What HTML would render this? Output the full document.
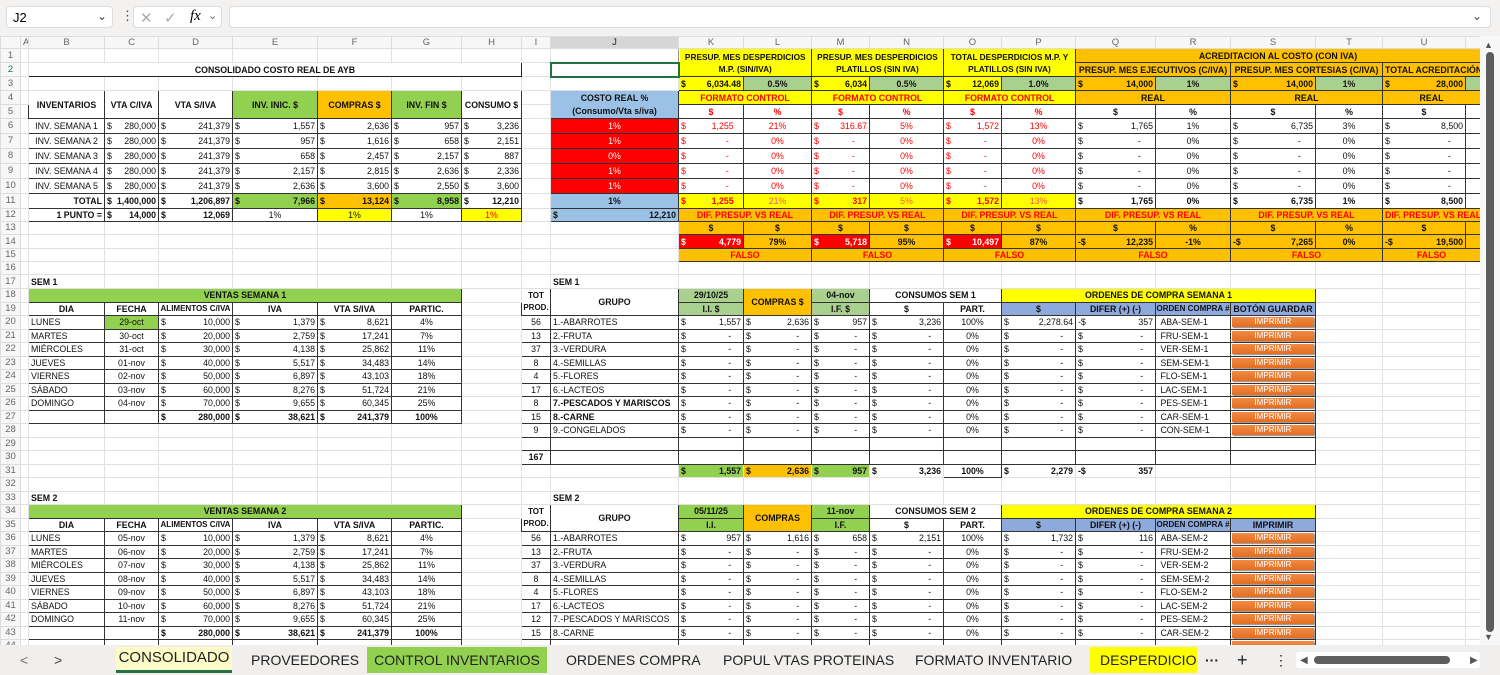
<!DOCTYPE html>
<html><head><meta charset="utf-8">
<style>
*{box-sizing:border-box;margin:0;padding:0}
body{width:1500px;height:675px;overflow:hidden;background:#fff;font-family:"Liberation Sans",sans-serif;position:relative}
#top{position:absolute;left:0;top:0;width:1500px;height:36px;background:#f3f2f0}
.box{position:absolute;background:#fff;border:1px solid #ddd;border-radius:4px}
#grid{position:absolute;left:0;top:36px;width:1480px;height:609px;overflow:hidden}
table{border-collapse:collapse;table-layout:fixed;width:1480px}
td{border:1px solid #e1e1e1;font-size:8.8px;line-height:10px;white-space:nowrap;overflow:hidden;padding:0 2px;color:#111;vertical-align:middle}
tr.ch td{background:#f7f7f7;color:#666;text-align:center;font-size:9.5px;height:12px;border-color:#ddd}
td.rh{background:#f7f7f7;color:#666;text-align:center;font-size:9.5px;padding:0;border-color:#ddd}
.k{border:1px solid #333}
.c{text-align:center}.r{text-align:right}.b{font-weight:bold}
.y{background:#ffff00}.o{background:#ffc000}.g{background:#92d050}.lg{background:#a9d08e}
.bl{background:#9bc2e6}.bb{background:#8ea9db}.rd{background:#ff0000;color:#fff}.rt{color:#f00}
.m{text-align:right}.m i{float:left;font-style:normal}
.d{border-bottom:1px dashed #000}
.w{white-space:normal;text-align:center;font-weight:bold;line-height:12px;font-size:8.3px}
.btn{display:block;background:linear-gradient(#f08a45,#e66d1f);color:#fff;text-align:center;font-size:8px;line-height:10px;margin:0 1px;box-shadow:1px 1px 1px #888}
.sel{border:2px solid #217346}
#tabs{position:absolute;left:0;top:645px;width:1500px;height:30px;background:#f0efed;font-size:14px;color:#222}
#tabs span{position:absolute;top:6px;line-height:18px}
</style></head><body>
<div id="top">
 <div class="box" style="left:6px;top:6px;width:107px;height:22px"><span style="position:absolute;left:6px;top:3px;font-size:13px">J2</span><span style="position:absolute;left:90px;top:2px;font-size:12px;color:#444">⌄</span></div>
 <span style="position:absolute;left:121px;top:8px;font-size:13px;color:#444">⋮</span>
 <div class="box" style="left:133px;top:6px;width:89px;height:22px"><span style="position:absolute;left:6px;top:2px;font-size:15px;color:#aaa">✕</span><span style="position:absolute;left:30px;top:2px;font-size:15px;color:#aaa">✓</span><span style="position:absolute;left:56px;top:1px;font-size:15px;font-style:italic;font-family:'Liberation Serif',serif">fx</span><span style="position:absolute;left:74px;top:2px;font-size:11px;color:#666">⌄</span></div>
 <div class="box" style="left:229px;top:6px;width:1262px;height:22px"><span style="position:absolute;right:8px;top:2px;font-size:12px;color:#444">⌄</span></div>
</div>
<div id="grid"><table>
<colgroup><col style="width:20px"><col style="width:8px"><col style="width:76px"><col style="width:54px"><col style="width:74px"><col style="width:85px"><col style="width:74px"><col style="width:70px"><col style="width:60px"><col style="width:29px"><col style="width:128px"><col style="width:65px"><col style="width:68px"><col style="width:58px"><col style="width:74px"><col style="width:58px"><col style="width:74px"><col style="width:80px"><col style="width:75px"><col style="width:85px"><col style="width:67px"><col style="width:83px"><col style="width:15px"></colgroup>
<tr class="ch"><td></td><td>A</td><td>B</td><td>C</td><td>D</td><td>E</td><td>F</td><td>G</td><td>H</td><td>I</td><td style="background:#d6d6d6;color:#222">J</td><td>K</td><td>L</td><td>M</td><td>N</td><td>O</td><td>P</td><td>Q</td><td>R</td><td>S</td><td>T</td><td>U</td><td></td></tr>
<tr style="height:14px"><td class="rh">1</td><td></td><td></td><td></td><td></td><td></td><td></td><td></td><td></td><td></td><td class="k" style="border-color:#999"></td><td colspan="2" rowspan="2" class="y k w">PRESUP. MES DESPERDICIOS M.P. (SIN/IVA)</td><td colspan="2" rowspan="2" class="y k w">PRESUP. MES DESPERDICIOS PLATILLOS (SIN IVA)</td><td colspan="2" rowspan="2" class="y k w">TOTAL DESPERDICIOS M.P. Y PLATILLOS (SIN IVA)</td><td colspan="6" class="o k b c">ACREDITACION AL COSTO (CON IVA)</td></tr>
<tr style="height:14px"><td class="rh" style="color:#217346">2</td><td></td><td colspan="7" class="k b c" style="border:1.5px solid #222">CONSOLIDADO COSTO REAL DE AYB</td><td></td><td class="sel"></td><td colspan="2" class="o k b c">PRESUP. MES EJECUTIVOS (C/IVA)</td><td colspan="2" class="o k b c">PRESUP. MES CORTESIAS (C/IVA)</td><td colspan="2" class="o k b">TOTAL ACREDITACIÓN</td></tr>
<tr style="height:14px"><td class="rh">3</td><td></td><td></td><td></td><td></td><td></td><td></td><td></td><td></td><td></td><td></td><td class="y k m b"><i>$</i>6,034.48</td><td class="lg k c b">0.5%</td><td class="y k m b"><i>$</i>6,034</td><td class="lg k c b">0.5%</td><td class="y k m b"><i>$</i>12,069</td><td class="lg k c b">1.0%</td><td class="o k m b"><i>$</i>14,000</td><td class="lg k c b">1%</td><td class="o k m b"><i>$</i>14,000</td><td class="lg k c b">1%</td><td class="o k m b"><i>$</i>28,000</td><td class="lg k"></td></tr>
<tr style="height:14px"><td class="rh">4</td><td></td><td rowspan="2" class="k b c">INVENTARIOS</td><td rowspan="2" class="k b c">VTA C/IVA</td><td rowspan="2" class="k b c">VTA S/IVA</td><td rowspan="2" class="g k b c">INV. INIC. $</td><td rowspan="2" class="o k b c">COMPRAS $</td><td rowspan="2" class="g k b c">INV. FIN $</td><td rowspan="2" class="k b c">CONSUMO $</td><td></td><td class="bl k b c" style="border-bottom:none">COSTO REAL %</td><td colspan="2" class="y k b c rt">FORMATO CONTROL</td><td colspan="2" class="y k b c rt">FORMATO CONTROL</td><td colspan="2" class="y k b c rt">FORMATO CONTROL</td><td colspan="2" class="o k b c">REAL</td><td colspan="2" class="o k b c">REAL</td><td colspan="2" class="o k b c">REAL</td></tr>
<tr style="height:14px"><td class="rh">5</td><td></td><td></td><td class="bl k b c" style="border-top:none">(Consumo/Vta s/iva)</td><td class="k b c rt">$</td><td class="k b c rt">%</td><td class="k b c rt">$</td><td class="k b c rt">%</td><td class="k b c rt">$</td><td class="k b c rt">%</td><td class="k b c">$</td><td class="k b c">%</td><td class="k b c">$</td><td class="k b c">%</td><td class="k b c">$</td><td class="k"></td></tr>
<tr style="height:15px"><td class="rh">6</td><td></td><td class="k c">INV. SEMANA 1</td><td class="k m"><i>$</i>280,000</td><td class="k m"><i>$</i>241,379</td><td class="k m"><i>$</i>1,557</td><td class="k m"><i>$</i>2,636</td><td class="k m"><i>$</i>957</td><td class="k m"><i>$</i>3,236</td><td></td><td class="rd k c">1%</td><td class="k m rt"><i>$</i>1,255&nbsp;&nbsp;&nbsp;</td><td class="k c rt">21%</td><td class="k m rt"><i>$</i>316.67</td><td class="k c rt">5%</td><td class="k m rt"><i>$</i>1,572</td><td class="k c rt">13%</td><td class="k m"><i>$</i>1,765</td><td class="k c">1%</td><td class="k m"><i>$</i>6,735</td><td class="k c">3%</td><td class="k m"><i>$</i>8,500</td><td class="k"></td></tr>
<tr style="height:15px"><td class="rh">7</td><td></td><td class="k c">INV. SEMANA 2</td><td class="k m"><i>$</i>280,000</td><td class="k m"><i>$</i>241,379</td><td class="k m"><i>$</i>957</td><td class="k m"><i>$</i>1,616</td><td class="k m"><i>$</i>658</td><td class="k m"><i>$</i>2,151</td><td></td><td class="rd k c">1%</td><td class="k m rt"><i>$</i>-&nbsp;&nbsp;&nbsp;&nbsp;&nbsp;</td><td class="k c rt">0%</td><td class="k m rt"><i>$</i>-&nbsp;&nbsp;&nbsp;&nbsp;&nbsp;</td><td class="k c rt">0%</td><td class="k m rt"><i>$</i>-&nbsp;&nbsp;&nbsp;&nbsp;&nbsp;</td><td class="k c rt">0%</td><td class="k m"><i>$</i>-&nbsp;&nbsp;&nbsp;&nbsp;&nbsp;</td><td class="k c">0%</td><td class="k m"><i>$</i>-&nbsp;&nbsp;&nbsp;&nbsp;&nbsp;</td><td class="k c">0%</td><td class="k m"><i>$</i>-&nbsp;&nbsp;&nbsp;&nbsp;&nbsp;</td><td class="k"></td></tr>
<tr style="height:15px"><td class="rh">8</td><td></td><td class="k c">INV. SEMANA 3</td><td class="k m"><i>$</i>280,000</td><td class="k m"><i>$</i>241,379</td><td class="k m"><i>$</i>658</td><td class="k m"><i>$</i>2,457</td><td class="k m"><i>$</i>2,157</td><td class="k m"><i>$</i>887</td><td></td><td class="rd k c">0%</td><td class="k m rt"><i>$</i>-&nbsp;&nbsp;&nbsp;&nbsp;&nbsp;</td><td class="k c rt">0%</td><td class="k m rt"><i>$</i>-&nbsp;&nbsp;&nbsp;&nbsp;&nbsp;</td><td class="k c rt">0%</td><td class="k m rt"><i>$</i>-&nbsp;&nbsp;&nbsp;&nbsp;&nbsp;</td><td class="k c rt">0%</td><td class="k m"><i>$</i>-&nbsp;&nbsp;&nbsp;&nbsp;&nbsp;</td><td class="k c">0%</td><td class="k m"><i>$</i>-&nbsp;&nbsp;&nbsp;&nbsp;&nbsp;</td><td class="k c">0%</td><td class="k m"><i>$</i>-&nbsp;&nbsp;&nbsp;&nbsp;&nbsp;</td><td class="k"></td></tr>
<tr style="height:15px"><td class="rh">9</td><td></td><td class="k c">INV. SEMANA 4</td><td class="k m"><i>$</i>280,000</td><td class="k m"><i>$</i>241,379</td><td class="k m"><i>$</i>2,157</td><td class="k m"><i>$</i>2,815</td><td class="k m"><i>$</i>2,636</td><td class="k m"><i>$</i>2,336</td><td></td><td class="rd k c">1%</td><td class="k m rt"><i>$</i>-&nbsp;&nbsp;&nbsp;&nbsp;&nbsp;</td><td class="k c rt">0%</td><td class="k m rt"><i>$</i>-&nbsp;&nbsp;&nbsp;&nbsp;&nbsp;</td><td class="k c rt">0%</td><td class="k m rt"><i>$</i>-&nbsp;&nbsp;&nbsp;&nbsp;&nbsp;</td><td class="k c rt">0%</td><td class="k m"><i>$</i>-&nbsp;&nbsp;&nbsp;&nbsp;&nbsp;</td><td class="k c">0%</td><td class="k m"><i>$</i>-&nbsp;&nbsp;&nbsp;&nbsp;&nbsp;</td><td class="k c">0%</td><td class="k m"><i>$</i>-&nbsp;&nbsp;&nbsp;&nbsp;&nbsp;</td><td class="k"></td></tr>
<tr style="height:15px"><td class="rh">10</td><td></td><td class="k c">INV. SEMANA 5</td><td class="k m"><i>$</i>280,000</td><td class="k m"><i>$</i>241,379</td><td class="k m"><i>$</i>2,636</td><td class="k m"><i>$</i>3,600</td><td class="k m"><i>$</i>2,550</td><td class="k m"><i>$</i>3,600</td><td></td><td class="rd k c">1%</td><td class="k m rt"><i>$</i>-&nbsp;&nbsp;&nbsp;&nbsp;&nbsp;</td><td class="k c rt">0%</td><td class="k m rt"><i>$</i>-&nbsp;&nbsp;&nbsp;&nbsp;&nbsp;</td><td class="k c rt">0%</td><td class="k m rt"><i>$</i>-&nbsp;&nbsp;&nbsp;&nbsp;&nbsp;</td><td class="k c rt">0%</td><td class="k m"><i>$</i>-&nbsp;&nbsp;&nbsp;&nbsp;&nbsp;</td><td class="k c">0%</td><td class="k m"><i>$</i>-&nbsp;&nbsp;&nbsp;&nbsp;&nbsp;</td><td class="k c">0%</td><td class="k m"><i>$</i>-&nbsp;&nbsp;&nbsp;&nbsp;&nbsp;</td><td class="k"></td></tr>
<tr style="height:15px"><td class="rh">11</td><td></td><td class="k r b">TOTAL</td><td class="k m b"><i>$</i>1,400,000</td><td class="k m b"><i>$</i>1,206,897</td><td class="g k m b"><i>$</i>7,966</td><td class="o k m b"><i>$</i>13,124</td><td class="g k m b"><i>$</i>8,958</td><td class="k m b"><i>$</i>12,210</td><td></td><td class="bl k c b">1%</td><td class="y k m b rt"><i>$</i>1,255&nbsp;&nbsp;&nbsp;</td><td class="y k c" style="color:#f55">21%</td><td class="y k m b rt"><i>$</i>317</td><td class="y k c" style="color:#f55">5%</td><td class="y k m b rt"><i>$</i>1,572</td><td class="y k c" style="color:#f55">13%</td><td class="k m b"><i>$</i>1,765</td><td class="k c b">0%</td><td class="k m b"><i>$</i>6,735</td><td class="k c b">1%</td><td class="k m b"><i>$</i>8,500</td><td class="k"></td></tr>
<tr style="height:13px"><td class="rh">12</td><td></td><td class="k r b">1 PUNTO =</td><td class="k m b"><i>$</i>14,000</td><td class="k m b"><i>$</i>12,069</td><td class="k c">1%</td><td class="y k c">1%</td><td class="k c">1%</td><td class="y k c rt">1%</td><td></td><td class="bl k m b"><i>$</i>12,210</td><td colspan="2" class="o k b c rt">DIF. PRESUP. VS REAL</td><td colspan="2" class="o k b c rt">DIF. PRESUP. VS REAL</td><td colspan="2" class="o k b c rt">DIF. PRESUP. VS REAL</td><td colspan="2" class="o k b c rt">DIF. PRESUP. VS REAL</td><td colspan="2" class="o k b c rt">DIF. PRESUP. VS REAL</td><td colspan="2" class="o k b c rt">DIF. PRESUP. VS REAL</td></tr>
<tr style="height:13px"><td class="rh">13</td><td></td><td></td><td></td><td></td><td></td><td></td><td></td><td></td><td></td><td></td><td class="o k b c">$</td><td class="o k b c">$</td><td class="o k b c">$</td><td class="o k b c">$</td><td class="o k b c">$</td><td class="o k b c">$</td><td class="o k b c">$</td><td class="o k b c">%</td><td class="o k b c">$</td><td class="o k b c">%</td><td class="o k b c">$</td><td class="o k"></td></tr>
<tr style="height:14px"><td class="rh">14</td><td></td><td></td><td></td><td></td><td></td><td></td><td></td><td></td><td></td><td></td><td class="rd k m b"><i>$</i>4,779</td><td class="o k c b">79%</td><td class="rd k m b"><i>$</i>5,718</td><td class="o k c b">95%</td><td class="rd k m b"><i>$</i>10,497</td><td class="o k c b">87%</td><td class="o k m b"><i>-$</i>12,235</td><td class="o k c b">-1%</td><td class="o k m b"><i>-$</i>7,265</td><td class="o k c b">0%</td><td class="o k m b"><i>-$</i>19,500</td><td class="o k"></td></tr>
<tr style="height:13px"><td class="rh">15</td><td></td><td></td><td></td><td></td><td></td><td></td><td></td><td></td><td></td><td></td><td colspan="2" class="o k b c rt">FALSO</td><td colspan="2" class="o k b c rt">FALSO</td><td colspan="2" class="o k b c rt">FALSO</td><td colspan="2" class="o k b c rt">FALSO</td><td colspan="2" class="o k b c rt">FALSO</td><td colspan="2" class="o k b c rt">FALSO</td></tr>
<tr style="height:13px"><td class="rh">16</td><td class="d"></td><td class="d"></td><td class="d"></td><td class="d"></td><td class="d"></td><td class="d"></td><td class="d"></td><td class="d"></td><td class="d"></td><td class="d"></td><td class="d"></td><td class="d"></td><td class="d"></td><td class="d"></td><td class="d"></td><td class="d"></td><td class="d"></td><td></td><td></td><td></td><td></td><td></td></tr>
<tr style="height:14px"><td class="rh">17</td><td></td><td class="b">SEM 1</td><td></td><td></td><td></td><td></td><td></td><td></td><td></td><td class="b">SEM 1</td><td></td><td></td><td></td><td></td><td></td><td></td><td></td><td></td><td></td><td></td><td></td><td></td></tr>
<tr style="height:13.5px"><td class="rh">18</td><td></td><td colspan="6" class="g k b c">VENTAS SEMANA 1</td><td></td><td rowspan="2" class="k w" style="line-height:12px;font-size:8px;padding:0">TOT PROD.</td><td rowspan="2" class="k b c">GRUPO</td><td class="lg k b c">29/10/25</td><td rowspan="2" class="o k b c">COMPRAS $</td><td class="lg k b c">04-nov</td><td colspan="2" class="k b c">CONSUMOS SEM 1</td><td colspan="4" class="y k b c">ORDENES DE COMPRA SEMANA 1</td><td></td><td></td><td></td></tr>
<tr style="height:13.5px"><td class="rh">19</td><td></td><td class="k b c">DIA</td><td class="k b c">FECHA</td><td class="k b c" style="padding:0;font-size:8px">ALIMENTOS C/IVA</td><td class="k b c">IVA</td><td class="k b c">VTA S/IVA</td><td class="k b c">PARTIC.</td><td></td><td class="lg k b c">I.I. $</td><td class="lg k b c">I.F. $</td><td class="k b c">$</td><td class="k b c">PART.</td><td class="bb k b c">$</td><td class="bb k b c">DIFER (+) (-)</td><td class="bb k b c" style="padding:0;font-size:8px">ORDEN COMPRA #</td><td class="bb k b c">BOTÓN GUARDAR</td><td></td><td></td><td></td></tr>
<tr style="height:13.5px"><td class="rh">20</td><td></td><td class="k">LUNES</td><td class="g k c">29-oct</td><td class="k m"><i>$</i>10,000</td><td class="k m"><i>$</i>1,379</td><td class="k m"><i>$</i>8,621</td><td class="k c">4%</td><td></td><td class="k c">56</td><td class="k">1.-ABARROTES</td><td class="k m"><i>$</i>1,557</td><td class="k m"><i>$</i>2,636</td><td class="k m"><i>$</i>957</td><td class="k m"><i>$</i>3,236</td><td class="k c">100%</td><td class="k m"><i>$</i>2,278.64</td><td class="k m"><i>-$</i>357</td><td class="k">&nbsp;ABA-SEM-1</td><td class="k" style="padding:0"><span class="btn">IMPRIMIR</span></td><td></td><td></td><td></td></tr>
<tr style="height:13.5px"><td class="rh">21</td><td></td><td class="k">MARTES</td><td class="k c">30-oct</td><td class="k m"><i>$</i>20,000</td><td class="k m"><i>$</i>2,759</td><td class="k m"><i>$</i>17,241</td><td class="k c">7%</td><td></td><td class="k c">13</td><td class="k">2.-FRUTA</td><td class="k m"><i>$</i>-&nbsp;&nbsp;&nbsp;&nbsp;</td><td class="k m"><i>$</i>-&nbsp;&nbsp;&nbsp;&nbsp;</td><td class="k m"><i>$</i>-&nbsp;&nbsp;&nbsp;&nbsp;</td><td class="k m"><i>$</i>-&nbsp;&nbsp;&nbsp;&nbsp;</td><td class="k c">0%</td><td class="k m"><i>$</i>-&nbsp;&nbsp;&nbsp;&nbsp;</td><td class="k m"><i>$</i>-&nbsp;&nbsp;&nbsp;&nbsp;</td><td class="k">&nbsp;FRU-SEM-1</td><td class="k" style="padding:0"><span class="btn">IMPRIMIR</span></td><td></td><td></td><td></td></tr>
<tr style="height:13.5px"><td class="rh">22</td><td></td><td class="k">MIÉRCOLES</td><td class="k c">31-oct</td><td class="k m"><i>$</i>30,000</td><td class="k m"><i>$</i>4,138</td><td class="k m"><i>$</i>25,862</td><td class="k c">11%</td><td></td><td class="k c">37</td><td class="k">3.-VERDURA</td><td class="k m"><i>$</i>-&nbsp;&nbsp;&nbsp;&nbsp;</td><td class="k m"><i>$</i>-&nbsp;&nbsp;&nbsp;&nbsp;</td><td class="k m"><i>$</i>-&nbsp;&nbsp;&nbsp;&nbsp;</td><td class="k m"><i>$</i>-&nbsp;&nbsp;&nbsp;&nbsp;</td><td class="k c">0%</td><td class="k m"><i>$</i>-&nbsp;&nbsp;&nbsp;&nbsp;</td><td class="k m"><i>$</i>-&nbsp;&nbsp;&nbsp;&nbsp;</td><td class="k">&nbsp;VER-SEM-1</td><td class="k" style="padding:0"><span class="btn">IMPRIMIR</span></td><td></td><td></td><td></td></tr>
<tr style="height:13.5px"><td class="rh">23</td><td></td><td class="k">JUEVES</td><td class="k c">01-nov</td><td class="k m"><i>$</i>40,000</td><td class="k m"><i>$</i>5,517</td><td class="k m"><i>$</i>34,483</td><td class="k c">14%</td><td></td><td class="k c">8</td><td class="k">4.-SEMILLAS</td><td class="k m"><i>$</i>-&nbsp;&nbsp;&nbsp;&nbsp;</td><td class="k m"><i>$</i>-&nbsp;&nbsp;&nbsp;&nbsp;</td><td class="k m"><i>$</i>-&nbsp;&nbsp;&nbsp;&nbsp;</td><td class="k m"><i>$</i>-&nbsp;&nbsp;&nbsp;&nbsp;</td><td class="k c">0%</td><td class="k m"><i>$</i>-&nbsp;&nbsp;&nbsp;&nbsp;</td><td class="k m"><i>$</i>-&nbsp;&nbsp;&nbsp;&nbsp;</td><td class="k">&nbsp;SEM-SEM-1</td><td class="k" style="padding:0"><span class="btn">IMPRIMIR</span></td><td></td><td></td><td></td></tr>
<tr style="height:13.5px"><td class="rh">24</td><td></td><td class="k">VIERNES</td><td class="k c">02-nov</td><td class="k m"><i>$</i>50,000</td><td class="k m"><i>$</i>6,897</td><td class="k m"><i>$</i>43,103</td><td class="k c">18%</td><td></td><td class="k c">4</td><td class="k">5.-FLORES</td><td class="k m"><i>$</i>-&nbsp;&nbsp;&nbsp;&nbsp;</td><td class="k m"><i>$</i>-&nbsp;&nbsp;&nbsp;&nbsp;</td><td class="k m"><i>$</i>-&nbsp;&nbsp;&nbsp;&nbsp;</td><td class="k m"><i>$</i>-&nbsp;&nbsp;&nbsp;&nbsp;</td><td class="k c">0%</td><td class="k m"><i>$</i>-&nbsp;&nbsp;&nbsp;&nbsp;</td><td class="k m"><i>$</i>-&nbsp;&nbsp;&nbsp;&nbsp;</td><td class="k">&nbsp;FLO-SEM-1</td><td class="k" style="padding:0"><span class="btn">IMPRIMIR</span></td><td></td><td></td><td></td></tr>
<tr style="height:13.5px"><td class="rh">25</td><td></td><td class="k">SÁBADO</td><td class="k c">03-nov</td><td class="k m"><i>$</i>60,000</td><td class="k m"><i>$</i>8,276</td><td class="k m"><i>$</i>51,724</td><td class="k c">21%</td><td></td><td class="k c">17</td><td class="k">6.-LACTEOS</td><td class="k m"><i>$</i>-&nbsp;&nbsp;&nbsp;&nbsp;</td><td class="k m"><i>$</i>-&nbsp;&nbsp;&nbsp;&nbsp;</td><td class="k m"><i>$</i>-&nbsp;&nbsp;&nbsp;&nbsp;</td><td class="k m"><i>$</i>-&nbsp;&nbsp;&nbsp;&nbsp;</td><td class="k c">0%</td><td class="k m"><i>$</i>-&nbsp;&nbsp;&nbsp;&nbsp;</td><td class="k m"><i>$</i>-&nbsp;&nbsp;&nbsp;&nbsp;</td><td class="k">&nbsp;LAC-SEM-1</td><td class="k" style="padding:0"><span class="btn">IMPRIMIR</span></td><td></td><td></td><td></td></tr>
<tr style="height:13.5px"><td class="rh">26</td><td></td><td class="k">DOMINGO</td><td class="k c">04-nov</td><td class="k m"><i>$</i>70,000</td><td class="k m"><i>$</i>9,655</td><td class="k m"><i>$</i>60,345</td><td class="k c">25%</td><td></td><td class="k c">8</td><td class="k b">7.-PESCADOS Y MARISCOS</td><td class="k m"><i>$</i>-&nbsp;&nbsp;&nbsp;&nbsp;</td><td class="k m"><i>$</i>-&nbsp;&nbsp;&nbsp;&nbsp;</td><td class="k m"><i>$</i>-&nbsp;&nbsp;&nbsp;&nbsp;</td><td class="k m"><i>$</i>-&nbsp;&nbsp;&nbsp;&nbsp;</td><td class="k c">0%</td><td class="k m"><i>$</i>-&nbsp;&nbsp;&nbsp;&nbsp;</td><td class="k m"><i>$</i>-&nbsp;&nbsp;&nbsp;&nbsp;</td><td class="k">&nbsp;PES-SEM-1</td><td class="k" style="padding:0"><span class="btn">IMPRIMIR</span></td><td></td><td></td><td></td></tr>
<tr style="height:13.5px"><td class="rh">27</td><td></td><td class="k"></td><td class="k"></td><td class="k m b"><i>$</i>280,000</td><td class="k m b"><i>$</i>38,621</td><td class="k m b"><i>$</i>241,379</td><td class="k c b">100%</td><td></td><td class="k c">15</td><td class="k b">8.-CARNE</td><td class="k m"><i>$</i>-&nbsp;&nbsp;&nbsp;&nbsp;</td><td class="k m"><i>$</i>-&nbsp;&nbsp;&nbsp;&nbsp;</td><td class="k m"><i>$</i>-&nbsp;&nbsp;&nbsp;&nbsp;</td><td class="k m"><i>$</i>-&nbsp;&nbsp;&nbsp;&nbsp;</td><td class="k c">0%</td><td class="k m"><i>$</i>-&nbsp;&nbsp;&nbsp;&nbsp;</td><td class="k m"><i>$</i>-&nbsp;&nbsp;&nbsp;&nbsp;</td><td class="k">&nbsp;CAR-SEM-1</td><td class="k" style="padding:0"><span class="btn">IMPRIMIR</span></td><td></td><td></td><td></td></tr>
<tr style="height:13.5px"><td class="rh">28</td><td></td><td></td><td></td><td></td><td></td><td></td><td></td><td></td><td class="k c">9</td><td class="k">9.-CONGELADOS</td><td class="k m"><i>$</i>-&nbsp;&nbsp;&nbsp;&nbsp;</td><td class="k m"><i>$</i>-&nbsp;&nbsp;&nbsp;&nbsp;</td><td class="k m"><i>$</i>-&nbsp;&nbsp;&nbsp;&nbsp;</td><td class="k m"><i>$</i>-&nbsp;&nbsp;&nbsp;&nbsp;</td><td class="k c">0%</td><td class="k m"><i>$</i>-&nbsp;&nbsp;&nbsp;&nbsp;</td><td class="k m"><i>$</i>-&nbsp;&nbsp;&nbsp;&nbsp;</td><td class="k">&nbsp;CON-SEM-1</td><td class="k" style="padding:0"><span class="btn">IMPRIMIR</span></td><td></td><td></td><td></td></tr>
<tr style="height:13.5px"><td class="rh">29</td><td></td><td></td><td></td><td></td><td></td><td></td><td></td><td></td><td class="k"></td><td class="k"></td><td class="k"></td><td class="k"></td><td class="k"></td><td class="k"></td><td class="k"></td><td class="k"></td><td class="k"></td><td class="k"></td><td class="k"></td><td></td><td></td><td></td></tr>
<tr style="height:13.5px"><td class="rh">30</td><td></td><td></td><td></td><td></td><td></td><td></td><td></td><td></td><td class="k c b">167</td><td class="k"></td><td class="k"></td><td class="k"></td><td class="k"></td><td class="k"></td><td class="k"></td><td class="k"></td><td class="k"></td><td class="k"></td><td class="k"></td><td></td><td></td><td></td></tr>
<tr style="height:13.5px"><td class="rh">31</td><td></td><td></td><td></td><td></td><td></td><td></td><td></td><td></td><td></td><td></td><td class="g m b"><i>$</i>1,557</td><td class="o m b"><i>$</i>2,636</td><td class="g m b"><i>$</i>957</td><td class="m b"><i>$</i>3,236</td><td class="k c b">100%</td><td class="m b"><i>$</i>2,279</td><td class="m b"><i>-$</i>357</td><td></td><td></td><td></td><td></td><td></td></tr>
<tr style="height:13.5px"><td class="rh">32</td><td class="d"></td><td class="d"></td><td class="d"></td><td class="d"></td><td class="d"></td><td class="d"></td><td class="d"></td><td class="d"></td><td class="d"></td><td class="d"></td><td class="d"></td><td class="d"></td><td class="d"></td><td class="d"></td><td class="d"></td><td class="d"></td><td class="d"></td><td></td><td></td><td></td><td></td><td></td></tr>
<tr style="height:13.5px"><td class="rh">33</td><td></td><td class="b">SEM 2</td><td></td><td></td><td></td><td></td><td></td><td></td><td></td><td class="b">SEM 2</td><td></td><td></td><td></td><td></td><td></td><td></td><td></td><td></td><td></td><td></td><td></td><td></td></tr>
<tr style="height:13.5px"><td class="rh">34</td><td></td><td colspan="6" class="g k b c">VENTAS SEMANA 2</td><td></td><td rowspan="2" class="k w" style="line-height:12px;font-size:8px;padding:0">TOT PROD.</td><td rowspan="2" class="k b c">GRUPO</td><td class="g k b c">05/11/25</td><td rowspan="2" class="o k b c">COMPRAS</td><td class="g k b c">11-nov</td><td colspan="2" class="k b c">CONSUMOS SEM 2</td><td colspan="4" class="y k b c">ORDENES DE COMPRA SEMANA 2</td><td></td><td></td><td></td></tr>
<tr style="height:13.5px"><td class="rh">35</td><td></td><td class="k b c">DIA</td><td class="k b c">FECHA</td><td class="k b c" style="padding:0;font-size:8px">ALIMENTOS C/IVA</td><td class="k b c">IVA</td><td class="k b c">VTA S/IVA</td><td class="k b c">PARTIC.</td><td></td><td class="g k b c">I.I.</td><td class="g k b c">I.F.</td><td class="k b c">$</td><td class="k b c">PART.</td><td class="bb k b c">$</td><td class="bb k b c">DIFER (+) (-)</td><td class="bb k b c" style="padding:0;font-size:8px">ORDEN COMPRA #</td><td class="bb k b c">IMPRIMIR</td><td></td><td></td><td></td></tr>
<tr style="height:13.5px"><td class="rh">36</td><td></td><td class="k">LUNES</td><td class="k c">05-nov</td><td class="k m"><i>$</i>10,000</td><td class="k m"><i>$</i>1,379</td><td class="k m"><i>$</i>8,621</td><td class="k c">4%</td><td></td><td class="k c">56</td><td class="k">1.-ABARROTES</td><td class="k m"><i>$</i>957</td><td class="k m"><i>$</i>1,616</td><td class="k m"><i>$</i>658</td><td class="k m"><i>$</i>2,151</td><td class="k c">100%</td><td class="k m"><i>$</i>1,732</td><td class="k m"><i>$</i>116</td><td class="k">&nbsp;ABA-SEM-2</td><td class="k" style="padding:0"><span class="btn">IMPRIMIR</span></td><td></td><td></td><td></td></tr>
<tr style="height:13.5px"><td class="rh">37</td><td></td><td class="k">MARTES</td><td class="k c">06-nov</td><td class="k m"><i>$</i>20,000</td><td class="k m"><i>$</i>2,759</td><td class="k m"><i>$</i>17,241</td><td class="k c">7%</td><td></td><td class="k c">13</td><td class="k">2.-FRUTA</td><td class="k m"><i>$</i>-&nbsp;&nbsp;&nbsp;&nbsp;</td><td class="k m"><i>$</i>-&nbsp;&nbsp;&nbsp;&nbsp;</td><td class="k m"><i>$</i>-&nbsp;&nbsp;&nbsp;&nbsp;</td><td class="k m"><i>$</i>-&nbsp;&nbsp;&nbsp;&nbsp;</td><td class="k c">0%</td><td class="k m"><i>$</i>-&nbsp;&nbsp;&nbsp;&nbsp;</td><td class="k m"><i>$</i>-&nbsp;&nbsp;&nbsp;&nbsp;</td><td class="k">&nbsp;FRU-SEM-2</td><td class="k" style="padding:0"><span class="btn">IMPRIMIR</span></td><td></td><td></td><td></td></tr>
<tr style="height:13.5px"><td class="rh">38</td><td></td><td class="k">MIÉRCOLES</td><td class="k c">07-nov</td><td class="k m"><i>$</i>30,000</td><td class="k m"><i>$</i>4,138</td><td class="k m"><i>$</i>25,862</td><td class="k c">11%</td><td></td><td class="k c">37</td><td class="k">3.-VERDURA</td><td class="k m"><i>$</i>-&nbsp;&nbsp;&nbsp;&nbsp;</td><td class="k m"><i>$</i>-&nbsp;&nbsp;&nbsp;&nbsp;</td><td class="k m"><i>$</i>-&nbsp;&nbsp;&nbsp;&nbsp;</td><td class="k m"><i>$</i>-&nbsp;&nbsp;&nbsp;&nbsp;</td><td class="k c">0%</td><td class="k m"><i>$</i>-&nbsp;&nbsp;&nbsp;&nbsp;</td><td class="k m"><i>$</i>-&nbsp;&nbsp;&nbsp;&nbsp;</td><td class="k">&nbsp;VER-SEM-2</td><td class="k" style="padding:0"><span class="btn">IMPRIMIR</span></td><td></td><td></td><td></td></tr>
<tr style="height:13.5px"><td class="rh">39</td><td></td><td class="k">JUEVES</td><td class="k c">08-nov</td><td class="k m"><i>$</i>40,000</td><td class="k m"><i>$</i>5,517</td><td class="k m"><i>$</i>34,483</td><td class="k c">14%</td><td></td><td class="k c">8</td><td class="k">4.-SEMILLAS</td><td class="k m"><i>$</i>-&nbsp;&nbsp;&nbsp;&nbsp;</td><td class="k m"><i>$</i>-&nbsp;&nbsp;&nbsp;&nbsp;</td><td class="k m"><i>$</i>-&nbsp;&nbsp;&nbsp;&nbsp;</td><td class="k m"><i>$</i>-&nbsp;&nbsp;&nbsp;&nbsp;</td><td class="k c">0%</td><td class="k m"><i>$</i>-&nbsp;&nbsp;&nbsp;&nbsp;</td><td class="k m"><i>$</i>-&nbsp;&nbsp;&nbsp;&nbsp;</td><td class="k">&nbsp;SEM-SEM-2</td><td class="k" style="padding:0"><span class="btn">IMPRIMIR</span></td><td></td><td></td><td></td></tr>
<tr style="height:13.5px"><td class="rh">40</td><td></td><td class="k">VIERNES</td><td class="k c">09-nov</td><td class="k m"><i>$</i>50,000</td><td class="k m"><i>$</i>6,897</td><td class="k m"><i>$</i>43,103</td><td class="k c">18%</td><td></td><td class="k c">4</td><td class="k">5.-FLORES</td><td class="k m"><i>$</i>-&nbsp;&nbsp;&nbsp;&nbsp;</td><td class="k m"><i>$</i>-&nbsp;&nbsp;&nbsp;&nbsp;</td><td class="k m"><i>$</i>-&nbsp;&nbsp;&nbsp;&nbsp;</td><td class="k m"><i>$</i>-&nbsp;&nbsp;&nbsp;&nbsp;</td><td class="k c">0%</td><td class="k m"><i>$</i>-&nbsp;&nbsp;&nbsp;&nbsp;</td><td class="k m"><i>$</i>-&nbsp;&nbsp;&nbsp;&nbsp;</td><td class="k">&nbsp;FLO-SEM-2</td><td class="k" style="padding:0"><span class="btn">IMPRIMIR</span></td><td></td><td></td><td></td></tr>
<tr style="height:13.5px"><td class="rh">41</td><td></td><td class="k">SÁBADO</td><td class="k c">10-nov</td><td class="k m"><i>$</i>60,000</td><td class="k m"><i>$</i>8,276</td><td class="k m"><i>$</i>51,724</td><td class="k c">21%</td><td></td><td class="k c">17</td><td class="k">6.-LACTEOS</td><td class="k m"><i>$</i>-&nbsp;&nbsp;&nbsp;&nbsp;</td><td class="k m"><i>$</i>-&nbsp;&nbsp;&nbsp;&nbsp;</td><td class="k m"><i>$</i>-&nbsp;&nbsp;&nbsp;&nbsp;</td><td class="k m"><i>$</i>-&nbsp;&nbsp;&nbsp;&nbsp;</td><td class="k c">0%</td><td class="k m"><i>$</i>-&nbsp;&nbsp;&nbsp;&nbsp;</td><td class="k m"><i>$</i>-&nbsp;&nbsp;&nbsp;&nbsp;</td><td class="k">&nbsp;LAC-SEM-2</td><td class="k" style="padding:0"><span class="btn">IMPRIMIR</span></td><td></td><td></td><td></td></tr>
<tr style="height:13.5px"><td class="rh">42</td><td></td><td class="k">DOMINGO</td><td class="k c">11-nov</td><td class="k m"><i>$</i>70,000</td><td class="k m"><i>$</i>9,655</td><td class="k m"><i>$</i>60,345</td><td class="k c">25%</td><td></td><td class="k c">12</td><td class="k">7.-PESCADOS Y MARISCOS</td><td class="k m"><i>$</i>-&nbsp;&nbsp;&nbsp;&nbsp;</td><td class="k m"><i>$</i>-&nbsp;&nbsp;&nbsp;&nbsp;</td><td class="k m"><i>$</i>-&nbsp;&nbsp;&nbsp;&nbsp;</td><td class="k m"><i>$</i>-&nbsp;&nbsp;&nbsp;&nbsp;</td><td class="k c">0%</td><td class="k m"><i>$</i>-&nbsp;&nbsp;&nbsp;&nbsp;</td><td class="k m"><i>$</i>-&nbsp;&nbsp;&nbsp;&nbsp;</td><td class="k">&nbsp;PES-SEM-2</td><td class="k" style="padding:0"><span class="btn">IMPRIMIR</span></td><td></td><td></td><td></td></tr>
<tr style="height:13.5px"><td class="rh">43</td><td></td><td class="k"></td><td class="k"></td><td class="k m b"><i>$</i>280,000</td><td class="k m b"><i>$</i>38,621</td><td class="k m b"><i>$</i>241,379</td><td class="k c b">100%</td><td></td><td class="k c">15</td><td class="k">8.-CARNE</td><td class="k m"><i>$</i>-&nbsp;&nbsp;&nbsp;&nbsp;</td><td class="k m"><i>$</i>-&nbsp;&nbsp;&nbsp;&nbsp;</td><td class="k m"><i>$</i>-&nbsp;&nbsp;&nbsp;&nbsp;</td><td class="k m"><i>$</i>-&nbsp;&nbsp;&nbsp;&nbsp;</td><td class="k c">0%</td><td class="k m"><i>$</i>-&nbsp;&nbsp;&nbsp;&nbsp;</td><td class="k m"><i>$</i>-&nbsp;&nbsp;&nbsp;&nbsp;</td><td class="k">&nbsp;CAR-SEM-2</td><td class="k" style="padding:0"><span class="btn">IMPRIMIR</span></td><td></td><td></td><td></td></tr>
<tr style="height:13.5px"><td class="rh">44</td><td></td><td class="k"></td><td class="k"></td><td class="k"></td><td class="k"></td><td class="k"></td><td class="k"></td><td></td><td class="k"></td><td class="k"></td><td class="k"></td><td class="k"></td><td class="k"></td><td class="k"></td><td class="k"></td><td class="k"></td><td class="k"></td><td class="k"></td><td class="k" style="padding:0"><span class="btn">&nbsp;</span></td><td></td><td></td><td></td></tr>
</table></div>
<div style="position:absolute;left:1480px;top:36px;width:20px;height:609px;background:#f7f7f7">
 <div style="position:absolute;left:4px;top:4px;font-size:9px;color:#555">▲</div>
 <div style="position:absolute;left:6px;top:16px;width:8px;height:580px;border-radius:4px;background:#5d5d5d"></div>
 <div style="position:absolute;left:4px;top:596px;font-size:9px;color:#555">▼</div>
</div>
<div id="tabs">
 <span style="left:20px;color:#777">&lt;</span><span style="left:54px;color:#444">&gt;</span>
 <span style="left:116px;top:2px;width:116px;height:26px;background:#fdfcc8;border-bottom:3px solid #217346;text-align:center;line-height:22px;font-size:15px">CONSOLIDADO</span>
 <span style="left:251px">PROVEEDORES</span>
 <span style="left:367px;top:2px;width:180px;height:26px;background:#92d050;text-align:center;line-height:26px">CONTROL INVENTARIOS</span>
 <span style="left:566px">ORDENES COMPRA</span>
 <span style="left:723px">POPUL VTAS PROTEINAS</span>
 <span style="left:915px">FORMATO INVENTARIO</span>
 <span style="left:1090px;top:2px;width:107px;height:26px;background:#ffff00;line-height:26px;padding-left:10px;overflow:hidden;white-space:nowrap">DESPERDICIO M</span>
 <span style="left:1205px;font-weight:bold">···</span><span style="left:1237px;font-size:18px">+</span><span style="left:1274px">⋮</span>
 <span style="left:1296px;top:7px;width:184px;height:16px;background:#fff;border-radius:3px"></span>
 <span style="left:1300px;top:7px;font-size:10px;color:#555">◀</span>
 <span style="left:1314px;top:11px;width:136px;height:8px;background:#5d5d5d;border-radius:4px"></span>
 <span style="left:1470px;top:7px;font-size:10px;color:#555">▶</span>
</div>
</body></html>
